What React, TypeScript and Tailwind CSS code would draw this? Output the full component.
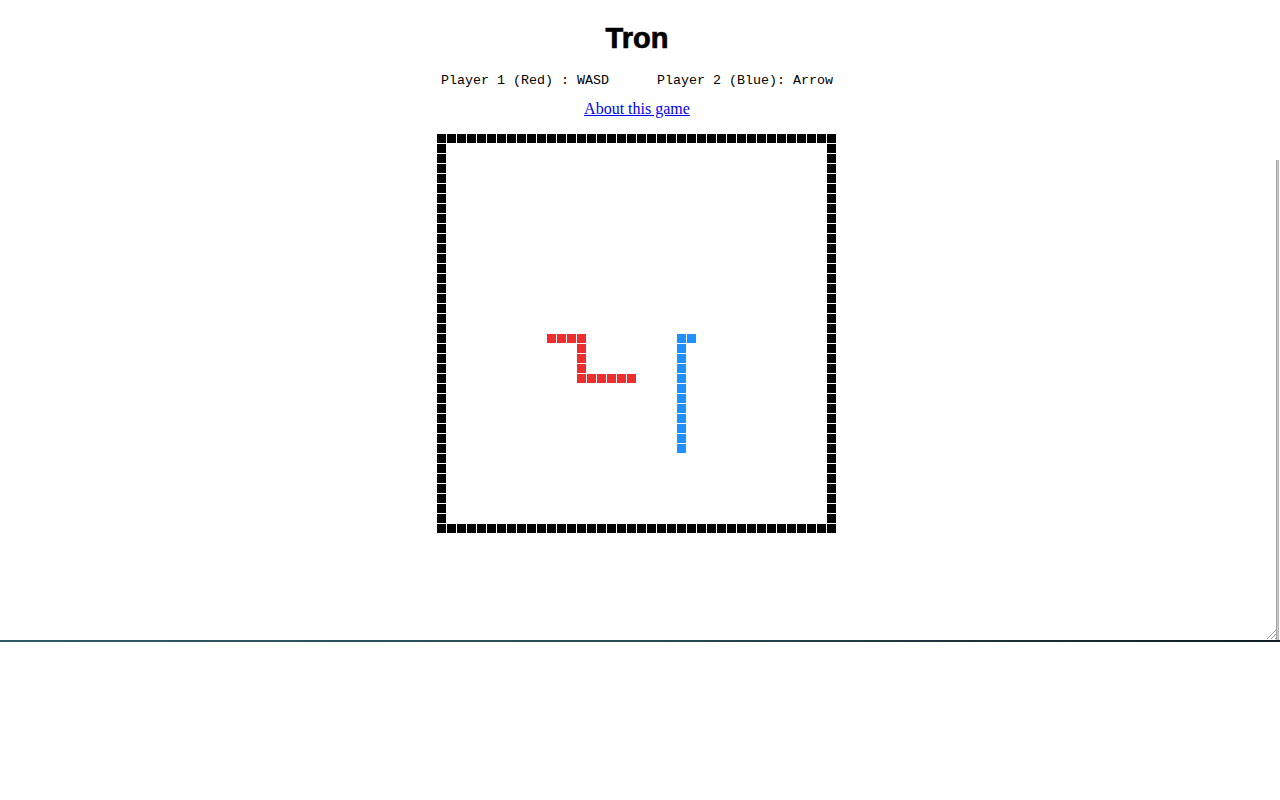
import React from "react";

const N = 40;

function buildCells(): string[] {
  const cells: string[] = new Array(N * N).fill("");
  for (let r = 0; r < N; r++) {
    for (let c = 0; c < N; c++) {
      if (r === 0 || c === 0 || r === N - 1 || c === N - 1) cells[r * N + c] = "w";
    }
  }
  const red: [number, number][] = [];
  for (let c = 11; c <= 14; c++) red.push([20, c]);
  for (let r = 21; r <= 24; r++) red.push([r, 14]);
  for (let c = 15; c <= 19; c++) red.push([24, c]);
  red.forEach(([r, c]) => (cells[r * N + c] = "r"));
  const blue: [number, number][] = [[20, 24], [20, 25]];
  for (let r = 21; r <= 31; r++) blue.push([r, 24]);
  blue.forEach(([r, c]) => (cells[r * N + c] = "b"));
  return cells;
}

export default function App() {
  const cells = buildCells();
  return (
    <div className="w-[1280px] h-[800px] bg-white overflow-hidden relative">
      <div className="flex h-[640px]">
        <div className="w-[1274px] flex flex-col items-center pt-[22px]">
          <div
            className="h-[32px] leading-[32px] text-[29px] font-bold text-black [-webkit-text-stroke:0.7px_black]"
            style={{ fontFamily: '"Liberation Sans", Arial, sans-serif' }}
          >
            Tron
          </div>
          <div
            className="mt-[19px] h-[16px] leading-[16px] text-[13.33px] text-black whitespace-pre"
            style={{ fontFamily: '"Liberation Mono", "Courier New", monospace' }}
          >
            {"Player 1 (Red) : WASD      Player 2 (Blue): Arrow"}
          </div>
          <a
            href="#"
            className="mt-[11px] h-[18px] leading-[18px] text-[16px] text-[#0000ee] underline"
            style={{ fontFamily: '"Liberation Serif", "Times New Roman", serif' }}
          >
            About this game
          </a>
          <div className="mt-[16px] grid grid-cols-[repeat(40,10px)] grid-rows-[repeat(40,10px)] w-[400px] h-[400px]">
            {cells.map((t, i) => (
              <div key={i} className="w-[10px] h-[10px]">
                {t === "w" && <div className="w-[9px] h-[9px] bg-black" />}
                {t === "r" && <div className="w-[9px] h-[9px] bg-[#ee2e2e]" />}
                {t === "b" && <div className="w-[9px] h-[9px] bg-[#1e90ff]" />}
              </div>
            ))}
          </div>
        </div>
        <div className="w-[6px] flex flex-col">
          <div className="h-[160px]" />
          <div className="flex-1 flex">
            <div className="w-[2px]" />
            <div className="w-[3px] bg-gradient-to-r from-[#9a9a9a] via-[#c8c8c8] to-[#b0b0b0]" />
          </div>
        </div>
      </div>
      <div className="h-[2px] bg-gradient-to-r from-[#2f5a66] via-[#2a4a55] to-[#0f1e24]" />
      <svg className="absolute left-[1264px] top-[626px]" width="14" height="14" viewBox="0 0 14 14">
        <line x1="13" y1="3" x2="3" y2="13" stroke="#999" strokeWidth="1" />
        <line x1="13" y1="7" x2="7" y2="13" stroke="#999" strokeWidth="1" />
        <line x1="13" y1="11" x2="11" y2="13" stroke="#999" strokeWidth="1" />
      </svg>
    </div>
  );
}
